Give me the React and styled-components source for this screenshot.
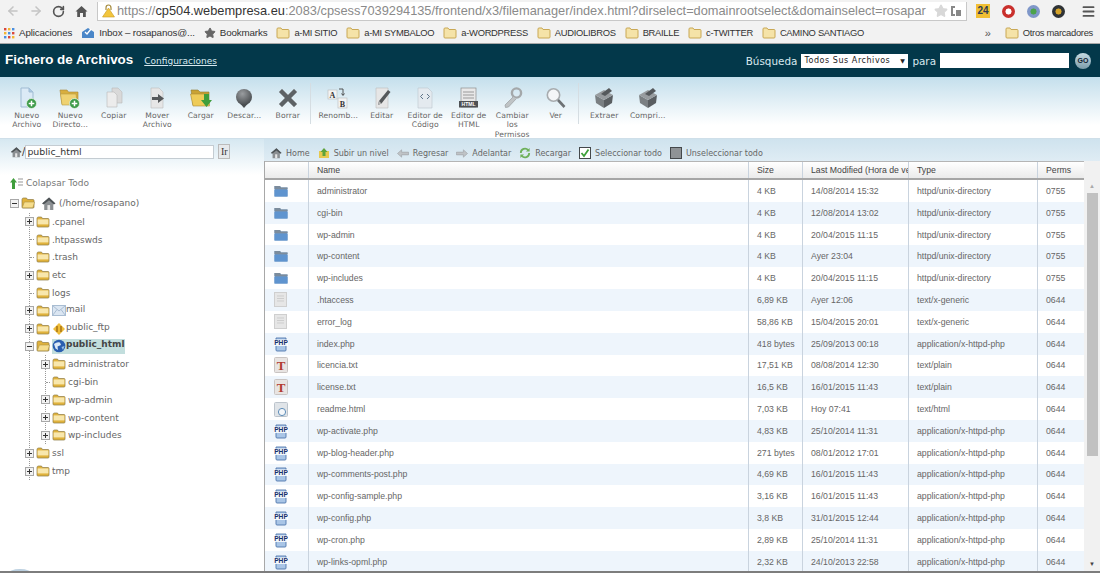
import React from 'react';
import styled, { createGlobalStyle } from 'styled-components';
import { ArrowLeft, ArrowRight, RotateCw, Star, Menu } from 'lucide-react';

const GlobalStyle = createGlobalStyle`
  html, body { margin: 0; padding: 0; background: #fff; }
  * { box-sizing: border-box; }
`;

const verdana = `"DejaVu Sans", Verdana, sans-serif`;
const arial = `"Liberation Sans", Arial, sans-serif`;

/* ---------- icons ---------- */

const YellowFolder = ({ open, size = 14 }) => (
  <svg width={size} height={size * 0.86} viewBox="0 0 14 12">
    <path d="M1 2.5 Q1 1 2.5 1 H5.5 L6.5 2.5 H12 Q13 2.5 13 3.5 V10 Q13 11 12 11 H2 Q1 11 1 10 Z" fill="#e0b23c" stroke="#8d7a45" strokeWidth=".7" />
    {open
      ? <path d="M1.2 10.8 L3.4 5 H13.6 L11.8 10.8 Z" fill="#f6dd8c" stroke="#a08a45" strokeWidth=".5" />
      : <rect x="1.6" y="3.4" width="10.8" height="5" fill="#f8e7ad" />}
  </svg>
);

const Expander = ({ minus }) => (
  <svg width="9" height="9" viewBox="0 0 9 9">
    <rect x=".5" y=".5" width="8" height="8" fill="#f2f2f2" stroke="#a8a8a8" />
    <path d={minus ? 'M2 4.5H7' : 'M2 4.5H7M4.5 2V7'} stroke="#333" strokeWidth="1" />
  </svg>
);

const House = ({ size = 14 }) => (
  <svg width={size} height={size} viewBox="0 0 14 14">
    <path d="M1 7 L7.5 1.5 L13.5 7 L11.5 7 V13 H3 V7 Z" fill="#8b8f92" />
    <path d="M1 7 L7.5 1.5 L13.5 7 L12 8 L7.5 4 L2.5 8 Z" fill="#4d5356" />
    <rect x="6" y="8.5" width="2.5" height="4.5" fill="#e6e6e6" />
  </svg>
);

const Globe = () => (
  <svg width="14" height="14" viewBox="0 0 14 14">
    <circle cx="7" cy="7" r="6.3" fill="#2a5fb0" />
    <path d="M2 5 Q5 2.5 8 3.5 L9 6 L5.5 7.5 L6 11 L3.5 9.5 Z" fill="#dbe9f6" />
    <path d="M9.5 8 L12.5 7 L11 11 Z" fill="#9cc3ea" />
  </svg>
);

const MailIcon = () => (
  <svg width="14" height="13" viewBox="0 0 14 13">
    <rect x=".5" y="1.5" width="13" height="10" fill="#dbe6f2" stroke="#a9bdd2" />
    <path d="M.5 1.5 L7 7 L13.5 1.5 M.5 11.5 L5 5.5 M13.5 11.5 L9 5.5" fill="none" stroke="#a9bdd2" />
  </svg>
);

const FtpIcon = () => (
  <svg width="14" height="14" viewBox="0 0 14 14">
    <path d="M7 1 L13 7 L7 13 L1 7 Z" fill="#eebc3a" />
    <path d="M5 4 V10 M9 4 V10" stroke="#a36f12" strokeWidth="1.4" />
  </svg>
);

const BlueFolder = () => (
  <svg width="14" height="12" viewBox="0 0 14 12">
    <path d="M0.5 1 H6 L7 2.5 H13.5 V11.5 H.5 Z" fill="#6d93bd" />
    <path d="M.5 1 H6 L7 2.5 H13.5 V4 H.5 Z" fill="#7c8c9c" />
    <rect x=".5" y="5" width="13" height="6.5" fill="#5f94cf" />
  </svg>
);

const BlankFile = () => (
  <svg width="13" height="15" viewBox="0 0 13 15">
    <rect x=".5" y=".5" width="12" height="14" fill="#e6e6e6" stroke="#cfcfcf" />
    <path d="M3 4H10M3 6.5H10M3 9H10" stroke="#cdcdcd" />
  </svg>
);

const PhpLabel = styled.text`
  font-family: ${arial};
  font-size: 6.6px;
  font-weight: 700;
  fill: #16306a;
`;

const PhpFile = () => (
  <svg width="14" height="16" viewBox="0 0 14 16">
    <path d="M2 2 H12 V14 Q12 15 11 15 H3 Q2 15 2 14 Z" fill="#a9c5e6" stroke="#4f76ad" strokeWidth=".9" />
    <rect x="0" y="3.5" width="14" height="6.5" fill="#fff" opacity=".85" />
    <PhpLabel x="7" y="9.2" textAnchor="middle">PHP</PhpLabel>
  </svg>
);

const TextLabel = styled.text`
  font-family: "Liberation Serif", serif;
  font-size: 13px;
  font-weight: 700;
  fill: #b23a30;
`;

const TextFile = () => (
  <svg width="14" height="16" viewBox="0 0 14 16">
    <rect x=".5" y=".5" width="13" height="15" rx="1" fill="#e8e4e2" stroke="#c9c4c2" />
    <TextLabel x="7" y="13" textAnchor="middle">T</TextLabel>
  </svg>
);

const HtmlFile = () => (
  <svg width="14" height="15" viewBox="0 0 14 15">
    <rect x=".5" y=".5" width="13" height="14" rx="1" fill="#e0e4e8" stroke="#bcc4cc" />
    <circle cx="8" cy="10" r="3.6" fill="#f4f7fa" stroke="#5f8db8" strokeWidth="1" />
  </svg>
);

const fileIcons = { dir: BlueFolder, blank: BlankFile, php: PhpFile, txt: TextFile, html: HtmlFile };

const GreenPlus = () => (
  <g>
    <circle cx="15.5" cy="16.5" r="5" fill="#3c9a48" stroke="#e8f4e8" strokeWidth=".8" />
    <path d="M12.7 16.5H18.3M15.5 13.7V19.3" stroke="#fff" strokeWidth="1.5" />
  </g>
);

const ToolbarIcon = ({ name }) => {
  switch (name) {
    case 'newfile':
      return (
        <svg width="22" height="22" viewBox="0 0 22 22">
          <path d="M5 1 H13 L17 5 V20 H5 Z" fill="#dbeaf6" stroke="#9fbbd3" />
          <path d="M13 1 V5 H17" fill="#a9c8e2" stroke="#9fbbd3" />
          <GreenPlus />
        </svg>
      );
    case 'newdir':
      return (
        <svg width="24" height="22" viewBox="0 0 22 22">
          <path d="M1 3 H8 L9.5 5 H19 V17 H3 Z" fill="#d8ae3e" stroke="#a8863a" strokeWidth=".6" />
          <path d="M3 18 L1.5 7 H17 L18.5 18 Z" fill="#efd272" stroke="#b79a45" strokeWidth=".6" />
          <GreenPlus />
        </svg>
      );
    case 'copy':
      return (
        <svg width="22" height="22" viewBox="0 0 22 22">
          <path d="M9 1 H15 L19 5 V16 H9 Z" fill="#d9d9d9" stroke="#bbb" strokeWidth=".6" />
          <path d="M4 5 H11 L14 8 V20 H4 Z" fill="#ececec" stroke="#bbb" strokeWidth=".6" />
        </svg>
      );
    case 'move':
      return (
        <svg width="22" height="22" viewBox="0 0 22 22">
          <path d="M5 1 H13 L17 5 V21 H5 Z" fill="#e6e6e6" stroke="#bdbdbd" strokeWidth=".6" />
          <path d="M6 10 H12 V7 L18 11.5 L12 16 V13 H6 Z" fill="#55585a" />
        </svg>
      );
    case 'upload':
      return (
        <svg width="24" height="22" viewBox="0 0 24 22">
          <path d="M2 3 H9 L11 5 H20 V18 H4 Z" fill="#c9a233" stroke="#8e7a30" strokeWidth=".6" />
          <path d="M4 19 L1.5 7 H19 L20.5 19 Z" fill="#eecb58" stroke="#a88c3a" strokeWidth=".6" />
          <path d="M15 7 H20 V13 H23 L17.5 20 L12 13 H15 Z" fill="#3f9e3c" />
        </svg>
      );
    case 'download':
      return (
        <svg width="22" height="22" viewBox="0 0 22 22">
          <defs>
            <radialGradient id="dl" cx=".4" cy=".3" r=".8">
              <stop offset="0" stopColor="#9a9da0" />
              <stop offset="1" stopColor="#3e4245" />
            </radialGradient>
          </defs>
          <circle cx="11" cy="10" r="8" fill="url(#dl)" />
          <path d="M7.5 17 H14.5 L11 21 Z" fill="#4a4e51" />
        </svg>
      );
    case 'delete':
      return (
        <svg width="22" height="22" viewBox="0 0 22 22">
          <path d="M2 5 L5 2 L11 8 L17 2 L20 5 L14 11 L20 17 L17 20 L11 14 L5 20 L2 17 L8 11 Z" fill="#5d6265" stroke="#8b9093" strokeWidth=".6" />
        </svg>
      );
    case 'rename':
      return (
        <svg width="22" height="22" viewBox="0 0 22 22">
          <rect x="1" y="3" width="9" height="9" fill="#f3f3f3" stroke="#bbb" strokeWidth=".6" />
          <rect x="11" y="11" width="9" height="10" fill="#f3f3f3" stroke="#bbb" strokeWidth=".6" />
          <RenameLabel x="5.5" y="10.5" textAnchor="middle">A</RenameLabel>
          <RenameLabel x="15.5" y="19.5" textAnchor="middle">B</RenameLabel>
          <path d="M12 2 H16 V8 M14.5 6.5 L16 8.5 L17.5 6.5" fill="none" stroke="#444" strokeWidth=".9" />
        </svg>
      );
    case 'edit':
      return (
        <svg width="22" height="22" viewBox="0 0 22 22">
          <path d="M5 1 H17 V21 H5 Z" fill="#e6e6e6" stroke="#bdbdbd" strokeWidth=".6" />
          <path d="M7 18 L8 14 L17 3 L19.5 5 L10.5 16.5 Z" fill="#55585a" />
          <path d="M7 18 L8 14 L10.5 16.5 Z" fill="#b8b8b8" />
        </svg>
      );
    case 'code':
      return (
        <svg width="22" height="22" viewBox="0 0 22 22">
          <path d="M4 1 H14 L18 5 V21 H4 Z" fill="#e4eaef" stroke="#bcc6cf" strokeWidth=".6" />
          <path d="M9 7 L6.5 9.5 L9 12 M13 7 L15.5 9.5 L13 12" fill="none" stroke="#5f7487" strokeWidth="1" />
        </svg>
      );
    case 'html':
      return (
        <svg width="22" height="22" viewBox="0 0 22 22">
          <rect x="3" y="1" width="15" height="19" fill="#e8e8e8" stroke="#8d8d8d" strokeWidth=".7" />
          <path d="M5 5H16M5 8H16M5 11H16" stroke="#9a9a9a" />
          <rect x="1" y="14" width="19" height="6.5" fill="#4e5154" />
          <HtmlLabel x="10.5" y="19.3" textAnchor="middle">HTML</HtmlLabel>
        </svg>
      );
    case 'perms':
      return (
        <svg width="22" height="22" viewBox="0 0 22 22">
          <circle cx="15.5" cy="6" r="4.6" fill="none" stroke="#a4a8aa" strokeWidth="2.4" />
          <path d="M12.5 9.5 L4 18 L4.5 20.5 L7.5 20 L15 12" fill="#bfc3c5" stroke="#9a9ea0" strokeWidth=".7" />
        </svg>
      );
    case 'view':
      return (
        <svg width="22" height="22" viewBox="0 0 22 22">
          <circle cx="8.5" cy="8" r="6.2" fill="#f4f6f8" stroke="#a8acaf" strokeWidth="1.6" />
          <path d="M13 13 L19.5 20" stroke="#6d7174" strokeWidth="2.6" />
        </svg>
      );
    default:
      return (
        <svg width="22" height="22" viewBox="0 0 22 22">
          <path d="M2 8 L11 13 L11 21 L3 16 Z" fill="#7a7f82" />
          <path d="M11 13 L20 8 L19 16 L11 21 Z" fill="#5a5e61" />
          <path d="M2 8 L11 3 L20 8 L11 13 Z" fill="#989c9f" />
          <path d="M8 7 L16 1 L19 4 L12 9 Z" fill="#55595c" />
        </svg>
      );
  }
};

const RenameLabel = styled.text`
  font-family: "Liberation Serif", serif;
  font-size: 8px;
  font-weight: 700;
  fill: #333;
`;

const HtmlLabel = styled.text`
  font-family: ${arial};
  font-size: 5px;
  font-weight: 700;
  fill: #fff;
`;

const BookmarkFolder = () => (
  <svg width="14" height="12" viewBox="0 0 14 12">
    <path d="M1 2 Q1 1 2 1 H5 L6 2.5 H12 Q13 2.5 13 3.5 V10 Q13 11 12 11 H2 Q1 11 1 10 Z" fill="#f5e3a8" stroke="#c9a855" />
  </svg>
);

/* ---------- data ---------- */

const bookmarks = ['a-MI SITIO', 'a-MI SYMBALOO', 'a-WORDPRESS', 'AUDIOLIBROS', 'BRAILLE', 'c-TWITTER', 'CAMINO SANTIAGO'];

const toolGroups = [
  {
    lead: 0,
    tools: [
      { icon: 'newfile', label: 'Nuevo Archivo' },
      { icon: 'newdir', label: 'Nuevo Directo...' },
      { icon: 'copy', label: 'Copiar' },
      { icon: 'move', label: 'Mover Archivo' },
      { icon: 'upload', label: 'Cargar' },
      { icon: 'download', label: 'Descar...' },
      { icon: 'delete', label: 'Borrar' },
    ],
  },
  {
    lead: 6,
    tools: [
      { icon: 'rename', label: 'Renomb...' },
      { icon: 'edit', label: 'Editar' },
      { icon: 'code', label: 'Editor de Código' },
      { icon: 'html', label: 'Editor de HTML' },
      { icon: 'perms', label: 'Cambiar los Permisos' },
      { icon: 'view', label: 'Ver' },
    ],
  },
  {
    lead: 4,
    tools: [
      { icon: 'box', label: 'Extraer' },
      { icon: 'box', label: 'Compri...' },
    ],
  },
];

const files = [
  ['dir', 'administrator', '4 KB', '14/08/2014 15:32', 'httpd/unix-directory', '0755'],
  ['dir', 'cgi-bin', '4 KB', '12/08/2014 13:02', 'httpd/unix-directory', '0755'],
  ['dir', 'wp-admin', '4 KB', '20/04/2015 11:15', 'httpd/unix-directory', '0755'],
  ['dir', 'wp-content', '4 KB', 'Ayer 23:04', 'httpd/unix-directory', '0755'],
  ['dir', 'wp-includes', '4 KB', '20/04/2015 11:15', 'httpd/unix-directory', '0755'],
  ['blank', '.htaccess', '6,89 KB', 'Ayer 12:06', 'text/x-generic', '0644'],
  ['blank', 'error_log', '58,86 KB', '15/04/2015 20:01', 'text/x-generic', '0644'],
  ['php', 'index.php', '418 bytes', '25/09/2013 00:18', 'application/x-httpd-php', '0644'],
  ['txt', 'licencia.txt', '17,51 KB', '08/08/2014 12:30', 'text/plain', '0644'],
  ['txt', 'license.txt', '16,5 KB', '16/01/2015 11:43', 'text/plain', '0644'],
  ['html', 'readme.html', '7,03 KB', 'Hoy 07:41', 'text/html', '0644'],
  ['php', 'wp-activate.php', '4,83 KB', '25/10/2014 11:31', 'application/x-httpd-php', '0644'],
  ['php', 'wp-blog-header.php', '271 bytes', '08/01/2012 17:01', 'application/x-httpd-php', '0644'],
  ['php', 'wp-comments-post.php', '4,69 KB', '16/01/2015 11:43', 'application/x-httpd-php', '0644'],
  ['php', 'wp-config-sample.php', '3,16 KB', '16/01/2015 11:43', 'application/x-httpd-php', '0644'],
  ['php', 'wp-config.php', '3,8 KB', '31/01/2015 12:44', 'application/x-httpd-php', '0644'],
  ['php', 'wp-cron.php', '2,89 KB', '25/10/2014 11:31', 'application/x-httpd-php', '0644'],
  ['php', 'wp-links-opml.php', '2,32 KB', '24/10/2013 22:58', 'application/x-httpd-php', '0644'],
];

/* ---------- small tree row ---------- */

const TreeNode = ({ label, expander, minus, badge, raised, bold, selected, open }) => (
  <TreeRow>
    <ExpanderSlot>{expander && <Expander minus={minus} />}{!expander && <Stub />}</ExpanderSlot>
    <FolderSlot><YellowFolder open={open} /></FolderSlot>
    <NodeLabel $selected={selected}>
      {badge}
      <NodeText $raised={raised} $bold={bold}>{label}</NodeText>
    </NodeLabel>
  </TreeRow>
);

const App = () => (
  <Page>
    <GlobalStyle />

    <BrowserBar>
      <NavIcon $color="#c4c4c4"><ArrowLeft size={14} strokeWidth={2.6} /></NavIcon>
      <NavIcon $color="#c4c4c4"><ArrowRight size={14} strokeWidth={2.6} /></NavIcon>
      <NavIcon $color="#555"><RotateCw size={13} strokeWidth={3} /></NavIcon>
      <NavIcon $color="#555">
        <svg width="13" height="13" viewBox="0 0 13 13"><path d="M6.5 1 L12.5 6.5 H10.8 V12 H8 V8 H5 V12 H2.2 V6.5 H.5 Z" fill="#555" /></svg>
      </NavIcon>
      <AddressBar>
        <svg width="13" height="14" viewBox="0 0 13 14">
          <path d="M4 6 V4 Q4 1 6.5 1 Q9 1 9 4 V6" fill="none" stroke="#a58a3c" strokeWidth="1.2" />
          <path d="M6.5 4 L12.5 13 H.5 Z" fill="#f2c53d" stroke="#c99a22" strokeWidth=".6" />
        </svg>
        <Url>
          https://<UrlHost>cp504.webempresa.eu</UrlHost>:2083/cpsess7039294135/frontend/x3/filemanager/index.html?dirselect=domainrootselect&amp;domainselect=rosapar
        </Url>
        <Star size={14} fill="#d8d8d8" color="#d8d8d8" />
        <svg width="12" height="12" viewBox="0 0 12 12"><path d="M1 1H5V3H3V9H5V11H1ZM6 5H11V11H6Z" fill="#888" /></svg>
      </AddressBar>
      <Extensions>
        <CountBadge>24</CountBadge>
        <ExtDot $outer="#c9302c" $inner="#fff" />
        <ExtDot $outer="#7f97c9" $inner="#4ba34b" />
        <ExtDot $outer="#2f3336" $inner="#d6a429" />
        <NavIcon $color="#555"><Menu size={15} strokeWidth={3} /></NavIcon>
      </Extensions>
    </BrowserBar>

    <BookmarkBar>
      <Bookmark>
        <svg width="12" height="12" viewBox="0 0 12 12">
          {[0, 1, 2].map((r) => [0, 1, 2].map((c) => (
            <rect key={`${r}${c}`} x={c * 4 + 1} y={r * 4 + 1} width="2.4" height="2.4" fill={['#d9483b', '#f2b632', '#4a8fe0'][(r + c) % 3]} />
          )))}
        </svg>
        Aplicaciones
      </Bookmark>
      <Bookmark>
        <svg width="14" height="12" viewBox="0 0 14 12"><path d="M1 5 L7 1 L13 5 V11 H1 Z" fill="#4a86c8" /><path d="M4 5 L6 7 L10 2" fill="none" stroke="#fff" strokeWidth="1.4" /></svg>
        Inbox – rosapanos@...
      </Bookmark>
      <Bookmark><Star size={12} fill="#666" color="#666" />Bookmarks</Bookmark>
      {bookmarks.map((b) => (
        <Bookmark key={b} $tight><BookmarkFolder />{b}</Bookmark>
      ))}
      <BookmarkEnd>
        <Chevrons>»</Chevrons>
        <Bookmark $tight><BookmarkFolder />Otros marcadores</Bookmark>
      </BookmarkEnd>
    </BookmarkBar>

    <TitleBar>
      <Title>Fichero de Archivos</Title>
      <SettingsLink>Configuraciones</SettingsLink>
      <SearchForm>
        <SearchLabel>Búsqueda</SearchLabel>
        <FakeSelect>Todos Sus Archivos<Caret>▼</Caret></FakeSelect>
        <SearchLabel>para</SearchLabel>
        <SearchInput />
        <GoButton>GO</GoButton>
      </SearchForm>
    </TitleBar>

    <Toolbar>
      {toolGroups.map((group, i) => (
        <React.Fragment key={i}>
          {i > 0 && <ToolDivider />}
          <ToolGroup $lead={group.lead}>
            {group.tools.map((tool) => (
              <Tool key={tool.label}>
                <ToolIconBox><ToolbarIcon name={tool.icon} /></ToolIconBox>
                <ToolLabel>{tool.label}</ToolLabel>
              </Tool>
            ))}
          </ToolGroup>
        </React.Fragment>
      ))}
    </Toolbar>

    <Panes>
      <TreePane>
        <PathRow>
          <House size={12} />
          <Slash>/</Slash>
          <PathInput>public_html</PathInput>
          <GoPath>Ir</GoPath>
        </PathRow>
        <CollapseRow>
          <svg width="13" height="11" viewBox="0 0 13 11">
            <path d="M3.5 0 L7 4.5 H5 V11 H2 V4.5 H0 Z" fill="#3f9e3c" />
            <path d="M8 1H13M8 4H13M8 7H13" stroke="#bbb" strokeWidth="1.4" />
          </svg>
          Colapsar Todo
        </CollapseRow>
        <RootRow>
          <ExpanderSlot><Expander minus /></ExpanderSlot>
          <FolderSlot><YellowFolder open /></FolderSlot>
          <RootHouse><House size={15} /></RootHouse>
          <NodeText>(/home/rosapano)</NodeText>
        </RootRow>
        <Branch $level={1}>
          <TreeNode label=".cpanel" expander />
          <TreeNode label=".htpasswds" />
          <TreeNode label=".trash" />
          <TreeNode label="etc" expander />
          <TreeNode label="logs" />
          <TreeNode label="mail" expander badge={<MailIcon />} raised />
          <TreeNode label="public_ftp" expander badge={<FtpIcon />} raised />
          <TreeNode label="public_html" expander minus open badge={<Globe />} raised bold selected />
          <Branch $level={2}>
            <TreeNode label="administrator" expander />
            <TreeNode label="cgi-bin" />
            <TreeNode label="wp-admin" expander />
            <TreeNode label="wp-content" expander />
            <TreeNode label="wp-includes" expander />
          </Branch>
          <TreeNode label="ssl" expander />
          <TreeNode label="tmp" expander />
        </Branch>
        <CornerBlob />
      </TreePane>

      <ListPane>
        <ActionBar>
          <Action><House size={12} />Home</Action>
          <Action>
            <svg width="12" height="12" viewBox="0 0 12 12"><path d="M1 4H11V11H1Z" fill="#e7c94f" /><path d="M6 1 L9.5 5 H7.5 V9 H4.5 V5 H2.5 Z" fill="#5da33c" /></svg>
            Subir un nivel
          </Action>
          <Action>
            <svg width="12" height="9" viewBox="0 0 13 9"><path d="M0.5 4.5 L5 .5 V3 H12.5 V6 H5 V8.5 Z" fill="#bfc3c6" stroke="#8f9396" strokeWidth=".5" /></svg>
            Regresar
          </Action>
          <Action>
            <svg width="12" height="9" viewBox="0 0 13 9"><path d="M12.5 4.5 L8 .5 V3 H.5 V6 H8 V8.5 Z" fill="#bfc3c6" stroke="#8f9396" strokeWidth=".5" /></svg>
            Adelantar
          </Action>
          <Action>
            <svg width="12" height="12" viewBox="0 0 13 12"><path d="M2 6 A4.5 4.5 0 0 1 10 3 M11 6 A4.5 4.5 0 0 1 3 9" fill="none" stroke="#6eb05a" strokeWidth="2" /><path d="M11.5 0.5 V4.5 H7.5 Z M1.5 11.5 V7.5 H5.5 Z" fill="#6eb05a" /></svg>
            Recargar
          </Action>
          <Action>
            <svg width="12" height="12" viewBox="0 0 12 12"><rect x=".5" y=".5" width="11" height="11" fill="#fff" stroke="#44484b" /><path d="M2.5 6 L5 9 L9.5 2.5" fill="none" stroke="#3da03a" strokeWidth="1.8" /></svg>
            Seleccionar todo
          </Action>
          <Action>
            <svg width="12" height="12" viewBox="0 0 12 12"><rect x=".5" y=".5" width="11" height="11" fill="#8f9396" stroke="#44484b" /></svg>
            Unseleccionar todo
          </Action>
        </ActionBar>

        <ListBody>
          <Table>
            <HeadRow>
              <Cell />
              <Cell>Name</Cell>
              <Cell>Size</Cell>
              <Cell>Last Modified (Hora de ve</Cell>
              <Cell>Type</Cell>
              <Cell>Perms</Cell>
            </HeadRow>
            {files.map(([kind, name, size, date, type, perms], i) => {
              const Icon = fileIcons[kind];
              return (
                <Row key={name} $stripe={i % 2 === 1}>
                  <IconCell><Icon /></IconCell>
                  <Cell>{name}</Cell>
                  <Cell>{size}</Cell>
                  <Cell>{date}</Cell>
                  <Cell>{type}</Cell>
                  <Cell>{perms}</Cell>
                </Row>
              );
            })}
          </Table>
          <ScrollBar>
            <ScrollArrow>▲</ScrollArrow>
            <ScrollThumb />
            <ScrollArrow $dark>▼</ScrollArrow>
          </ScrollBar>
        </ListBody>
      </ListPane>
    </Panes>
  </Page>
);

const Page = styled.div`
  width: 1100px;
  height: 573px;
  overflow: hidden;
  display: flex;
  flex-direction: column;
  background: #fff;
  border-bottom: 2px solid #7d7d7d;
`;

const BrowserBar = styled.div`
  height: 22px;
  flex: none;
  display: flex;
  align-items: center;
  background: #f2f2f2;
  padding-left: 1px;
`;

const NavIcon = styled.div`
  width: 23px;
  display: flex;
  justify-content: center;
  align-items: center;
  color: ${(p) => p.$color};
`;

const AddressBar = styled.div`
  width: 870px;
  height: 19px;
  margin-left: 4px;
  padding: 0 4px 0 4px;
  display: flex;
  align-items: center;
  gap: 2px;
  background: #fff;
  border: 1px solid #c8c8c8;
  border-top: none;
`;

const Url = styled.div`
  flex: 1;
  overflow: hidden;
  white-space: nowrap;
  font: 12.8px ${arial};
  color: #8a8a8a;
`;

const UrlHost = styled.span`
  color: #333;
`;

const Extensions = styled.div`
  flex: 1;
  display: flex;
  align-items: center;
  gap: 12px;
  padding-left: 9px;
`;

const CountBadge = styled.div`
  width: 14px;
  height: 14px;
  background: #f1bf33;
  color: #2c3a55;
  font: 700 10px/14px ${arial};
  text-align: center;
`;

const ExtDot = styled.div`
  width: 13px;
  height: 13px;
  border-radius: 50%;
  background: radial-gradient(circle, ${(p) => p.$inner} 0 30%, ${(p) => p.$outer} 36%);
`;

const BookmarkBar = styled.div`
  height: 22px;
  flex: none;
  display: flex;
  align-items: center;
  gap: 9px;
  padding-left: 3px;
  background: #f2f2f2;
  border-bottom: 1px solid #a8a8a8;
`;

const Bookmark = styled.div`
  display: flex;
  align-items: center;
  gap: 4px;
  font: ${(p) => (p.$tight ? '9.4px' : '9.8px')} ${arial};
  letter-spacing: ${(p) => (p.$tight ? '-.3px' : '-.15px')};
  color: #333;
  white-space: nowrap;
`;

const BookmarkEnd = styled.div`
  margin-left: auto;
  display: flex;
  align-items: center;
  gap: 14px;
  padding-right: 7px;
`;

const Chevrons = styled.span`
  font: 11px ${arial};
  color: #555;
`;

const TitleBar = styled.div`
  height: 33px;
  flex: none;
  display: flex;
  align-items: center;
  padding: 0 9px 0 5px;
  background: #03384a;
  color: #fff;
`;

const Title = styled.div`
  font: 700 13.4px ${arial};
  margin-top: -3px;
`;

const SettingsLink = styled.a`
  margin-left: 11px;
  font: 9px ${verdana};
  color: #d7e8ef;
  text-decoration: underline;
`;

const SearchForm = styled.div`
  margin-left: auto;
  display: flex;
  align-items: center;
  gap: 4px;
`;

const SearchLabel = styled.span`
  font: 10.4px ${verdana};
  color: #d9e9ef;
`;

const FakeSelect = styled.div`
  width: 107px;
  height: 14px;
  display: flex;
  align-items: center;
  justify-content: space-between;
  padding: 0 3px;
  background: #fff;
  font: 8px ${verdana};
  letter-spacing: .55px;
  color: #222;
`;

const Caret = styled.span`
  font-size: 6px;
`;

const SearchInput = styled.div`
  width: 129px;
  height: 15px;
  background: #fff;
`;

const GoButton = styled.div`
  width: 16px;
  height: 16px;
  margin-left: 2px;
  border-radius: 50%;
  background: linear-gradient(#c6dbe3, #7b9daa);
  color: #123;
  font: 700 7px/16px ${arial};
  text-align: center;
`;

const Toolbar = styled.div`
  height: 62px;
  flex: none;
  display: flex;
  align-items: flex-start;
  padding: 9px 0 0 5px;
  background: linear-gradient(#c4dfec 0, #fff 48px);
  border-bottom: 1px solid #cfdfe9;
`;

const ToolDivider = styled.div`
  width: 1px;
  height: 41px;
  margin-top: -3px;
  background: #d5dde2;
`;

const ToolGroup = styled.div`
  display: flex;
  padding-left: ${(p) => p.$lead}px;
`;

const Tool = styled.div`
  width: 43.5px;
  display: flex;
  flex-direction: column;
  align-items: center;
`;

const ToolIconBox = styled.div`
  height: 24px;
  display: flex;
  align-items: center;
  justify-content: center;
`;

const ToolLabel = styled.div`
  margin-top: 1px;
  width: 43px;
  text-align: center;
  font: 7.6px/9.4px ${verdana};
  color: #666;
  letter-spacing: .1px;
`;

const Panes = styled.div`
  flex: 1;
  min-height: 0;
  display: flex;
`;

const TreePane = styled.div`
  position: relative;
  width: 264px;
  flex: none;
  overflow: hidden;
  background: linear-gradient(#d6e8f1 0, #fff 36px);
`;

const PathRow = styled.div`
  height: 22px;
  display: flex;
  align-items: center;
  padding: 3px 0 0 10px;
  font: 10px ${verdana};
  color: #333;
`;

const Slash = styled.span`
  margin: 0;
`;

const PathInput = styled.div`
  width: 189px;
  height: 14px;
  padding-left: 1px;
  background: #fff;
  border: 1px solid #c4ccd2;
  font: 9.4px/12px ${verdana};
  color: #333;
`;

const GoPath = styled.div`
  width: 12px;
  height: 15px;
  margin-left: 4px;
  background: #e6e9ec;
  border: 1px solid #bbb;
  font: 10px/13px "Liberation Serif", serif;
  color: #333;
  text-align: center;
`;

const CollapseRow = styled.div`
  height: 22px;
  margin-top: 11px;
  display: flex;
  align-items: center;
  gap: 3px;
  padding-left: 10px;
  font: 9px ${verdana};
  color: #777;
`;

const RootRow = styled.div`
  height: 18px;
  padding-left: 10px;
  display: flex;
  align-items: center;
`;

const RootHouse = styled.div`
  display: flex;
  margin: 0 3px 0 4px;
`;

const Branch = styled.div`
  margin-left: ${(p) => (p.$level === 1 ? '29px' : '15px')};
  margin-top: ${(p) => (p.$level === 1 ? '1px' : '0')};
  border-left: 1px dotted #999;
`;

const TreeRow = styled.div`
  height: 17.8px;
  margin-left: -5px;
  display: flex;
  align-items: center;
`;

const ExpanderSlot = styled.div`
  width: 9px;
  flex: none;
  display: flex;
  align-items: center;
  position: relative;
  z-index: 1;
`;

const Stub = styled.div`
  width: 9px;
  margin-left: 5px;
  border-top: 1px dotted #999;
`;

const FolderSlot = styled.div`
  width: 16px;
  flex: none;
  margin-left: 2px;
  display: flex;
  align-items: center;
`;

const NodeLabel = styled.div`
  display: flex;
  align-items: center;
  height: 15px;
  background: ${(p) => (p.$selected ? '#c2dedd' : 'transparent')};
  padding-right: ${(p) => (p.$selected ? '1px' : 0)};
`;

const NodeText = styled.span`
  font: ${(p) => (p.$bold ? 700 : 400)} 9px ${verdana};
  color: ${(p) => (p.$bold ? '#444' : '#666')};
  white-space: nowrap;
  position: relative;
  top: ${(p) => (p.$raised ? '-2px' : 0)};
`;

const CornerBlob = styled.div`
  position: absolute;
  left: 8px;
  bottom: -8px;
  width: 24px;
  height: 10px;
  border-radius: 50%;
  background: #bcd0e0;
`;

const ListPane = styled.div`
  flex: 1;
  min-width: 0;
  display: flex;
  flex-direction: column;
`;

const ActionBar = styled.div`
  height: 22px;
  flex: none;
  display: flex;
  align-items: center;
  gap: 8px;
  padding: 6px 0 0 6px;
  background: linear-gradient(#cfe3ee, #dfecf4);
`;

const Action = styled.div`
  display: flex;
  align-items: center;
  gap: 4px;
  font: 8px ${verdana};
  color: #666;
  white-space: nowrap;
`;

const ListBody = styled.div`
  flex: 1;
  min-height: 0;
  display: flex;
  border-left: 1px solid #a8a8a8;
  overflow: hidden;
`;

const Table = styled.div`
  width: 819px;
  flex: none;
`;

const columns = `44px 440px 54px 106px 129px 46px`;

const HeadRow = styled.div`
  display: grid;
  grid-template-columns: ${columns};
  height: 19px;
  align-items: stretch;
  background: linear-gradient(#fff, #ebebeb);
  border-top: 1px solid #b5b5b5;
  border-bottom: 2px solid #a6a6a6;
  color: #444;
`;

const Row = styled.div`
  display: grid;
  grid-template-columns: ${columns};
  height: 21.82px;
  align-items: stretch;
  background: ${(p) => (p.$stripe ? '#eef5fc' : '#fff')};
  color: #666;
`;

const Cell = styled.div`
  display: flex;
  align-items: center;
  padding-left: 8px;
  overflow: hidden;
  white-space: nowrap;
  font: 8.7px ${arial};
  border-right: 1px solid #c9d3de;
  &:last-child { border-right: none; }
`;

const IconCell = styled(Cell)`
  padding-left: 9px;
`;

const ScrollBar = styled.div`
  width: 16px;
  flex: none;
  display: flex;
  flex-direction: column;
  align-items: center;
  background: #f1f1f1;
`;

const ScrollArrow = styled.div`
  height: 13px;
  margin-top: ${(p) => (p.$dark ? 'auto' : '19px')};
  font: 6px/13px ${arial};
  color: ${(p) => (p.$dark ? '#444' : '#aaa')};
`;

const ScrollThumb = styled.div`
  width: 11px;
  height: 263px;
  background: #c1c1c1;
`;

export default App;
